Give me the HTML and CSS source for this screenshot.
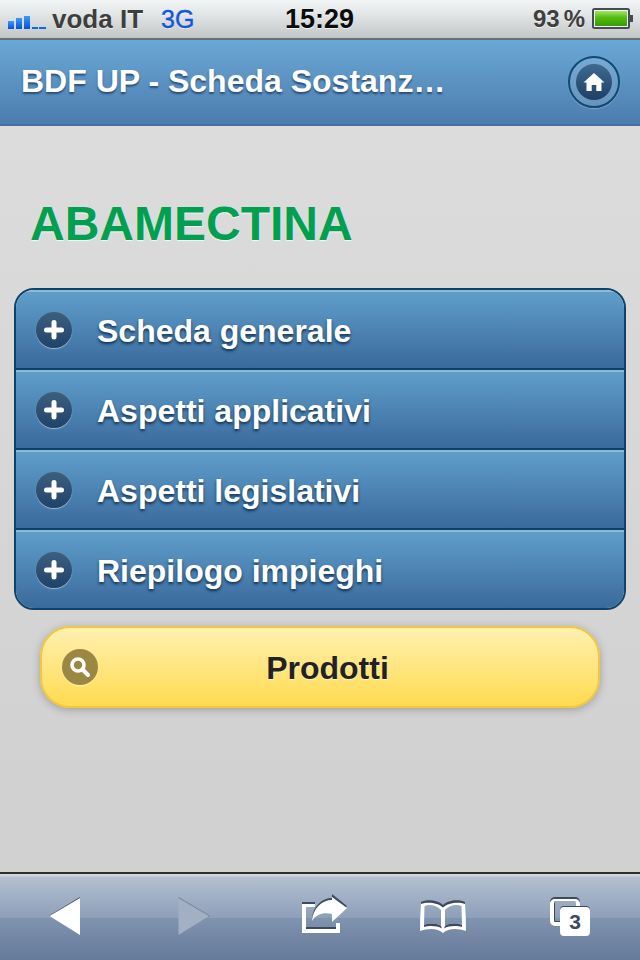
FILE: index.html
```html
<!DOCTYPE html>
<html lang="it">
<head>
<meta charset="utf-8">
<title>BDF UP - Scheda Sostanza</title>
<link rel="stylesheet" href="styles.css">
</head>
<body>
<div class="statusbar">
  <div class="status-left">
    <svg class="signal" width="40" height="14" viewBox="0 0 40 14">
      <defs><linearGradient id="sig" x1="0" y1="0" x2="0" y2="1"><stop offset="0" stop-color="#3b9bf5"/><stop offset="1" stop-color="#0a4fd8"/></linearGradient></defs>
      <rect x="0" y="6" width="6" height="8" fill="url(#sig)"/>
      <rect x="8" y="3" width="6" height="11" fill="url(#sig)"/>
      <rect x="16" y="1" width="6" height="13" fill="url(#sig)"/>
      <rect x="24" y="12" width="6" height="2" fill="#1a63e0"/>
      <rect x="31" y="12" width="7" height="2" fill="#1a63e0"/>
    </svg>
    <span class="carrier">voda IT</span>
    <span class="net">3G</span>
  </div>
  <span class="clock">15:29</span>
  <div class="status-right">
    <span class="pct">93 %</span>
    <svg class="battery" width="42" height="22" viewBox="0 0 42 22">
      <defs><linearGradient id="bat" x1="0" y1="0" x2="0" y2="1"><stop offset="0" stop-color="#a4e464"/><stop offset="0.45" stop-color="#52bc0e"/><stop offset="1" stop-color="#3a9a05"/></linearGradient></defs>
      <rect x="1" y="1" width="36" height="19" rx="1.5" fill="#f2f4f4" stroke="#444c5c" stroke-width="2"/>
      <rect x="3" y="3" width="32" height="15" fill="url(#bat)"/>
      <rect x="38" y="7" width="3" height="7" fill="#444c5c"/>
    </svg>
  </div>
</div>

<header class="topbar">
  <h1 class="topbar-title">BDF UP - Scheda Sostanz…</h1>
  <div class="home-ring">
    <span class="home-disc">
      <svg width="24" height="20" viewBox="0 0 22 20"><path d="M11 1 L21.500 10.500 H18.500 V19 H13.300 V13 H8.700 V19 H3.500 V10.500 H0.500 Z" fill="#fff"/></svg>
    </span>
  </div>
</header>

<main class="content">
  <h2 class="substance">ABAMECTINA</h2>
  <ul class="accordion">
    <li class="acc-row"><span class="plus"><svg width="26" height="26" viewBox="0 0 26 26"><path d="M13 5.500 V20 M5.500 13 H20.500" stroke="#fff" stroke-width="5" stroke-linecap="round"/></svg></span><span class="acc-label">Scheda generale</span></li>
    <li class="acc-row"><span class="plus"><svg width="26" height="26" viewBox="0 0 26 26"><path d="M13 5.500 V20 M5.500 13 H20.500" stroke="#fff" stroke-width="5" stroke-linecap="round"/></svg></span><span class="acc-label">Aspetti applicativi</span></li>
    <li class="acc-row"><span class="plus"><svg width="26" height="26" viewBox="0 0 26 26"><path d="M13 5.500 V20 M5.500 13 H20.500" stroke="#fff" stroke-width="5" stroke-linecap="round"/></svg></span><span class="acc-label">Aspetti legislativi</span></li>
    <li class="acc-row"><span class="plus"><svg width="26" height="26" viewBox="0 0 26 26"><path d="M13 5.500 V20 M5.500 13 H20.500" stroke="#fff" stroke-width="5" stroke-linecap="round"/></svg></span><span class="acc-label">Riepilogo impieghi</span></li>
  </ul>
  <div class="products">
    <span class="search-disc"><svg width="26" height="26" viewBox="0 0 26 26"><circle cx="11" cy="11" r="6" fill="none" stroke="#fff" stroke-width="3.600"/><path d="M15.500 15.500 L21 21" stroke="#fff" stroke-width="4" stroke-linecap="round"/></svg></span>
    <span class="products-label">Prodotti</span>
  </div>
</main>

<footer class="toolbar">
  <svg class="tool" width="36" height="42" viewBox="0 1 36 42">
    <path d="M32 2 V3.500 L3 22 L1.500 20.500 Z" fill="#3c4a60"/>
    <path d="M32 3 V40 L1.500 21 Z" fill="#fff"/>
  </svg>
  <svg class="tool" width="36" height="42" viewBox="0 1 36 42">
    <path d="M2.500 2 V3.500 L33 22 L33.500 20.500 Z" fill="#6f7f98"/>
    <path d="M2.500 3 V40 L33 21 Z" fill="#a3b0c3"/>
  </svg>
  <svg class="tool" width="50" height="46" viewBox="0 0 50 46">
    <path d="M2 10 H15 V13 H6 V35 H36 V29 H40 V39 H2 Z" fill="#fff"/>
    <path d="M2 8 H15 V10 H2 Z M6 33 H36 V35 H6 Z" fill="#3c4a60"/>
    <path d="M32 0 L47 12 L32 26 V18 C24 16 16 18 12 25 C13 12 22 4 32 4 Z" fill="#3c4a60"/>
    <path d="M32 3 L47 14 L32 28 V20 C24 18 16 20 12 27 C13 14 22 6 32 6 Z" fill="#fff"/>
  </svg>
  <svg class="tool" width="50" height="38" viewBox="0 1 50 38">
    <path d="M25 9 C20 4 9 3 3 6 Q2 20 2 34 C10 31 20 31 25 36 C30 31 40 31 48 34 Q48 20 47 6 C41 3 30 4 25 9 Z M23 13 V29 C18 26 10 26 6 28 L6.500 9 C11 7 19 8 23 13 Z M27 13 C31 8 39 7 43.500 9 L44 28 C40 26 32 26 27 29 Z" fill="#fff" fill-rule="evenodd"/>
    <path d="M3 5 C9 2 20 3 25 8 C30 3 41 2 47 5 L47 7 C41 4.500 30 5.500 25 10.500 C20 5.500 9 4.500 3 7 Z M6 28 C11 26 18 26 23 29 L24 31.500 C19 28.500 11 28.500 6 30 Z M44 28 C39 26 32 26 27 29 L26 31.500 C31 28.500 39 28.500 44 30 Z" fill="#3c4a60"/>
  </svg>
  <div class="tabs">
    <span class="tab-back"></span>
    <span class="tab-front">3</span>
  </div>
</footer>
</body>
</html>
```
FILE: styles.css
```css
* { box-sizing: border-box; }
html, body { margin: 0; padding: 0; }
body {
  width: 640px;
  height: 960px;
  overflow: hidden;
  display: flex;
  flex-direction: column;
  font-family: "Liberation Sans", Arial, sans-serif;
  background: #d6d6d6;
}

.statusbar {
  height: 40px;
  flex: none;
  display: flex;
  align-items: center;
  justify-content: space-between;
  padding: 0 6px 0 8px;
  position: relative;
  background: linear-gradient(#f1f5f6, #e4e7e8 35%, #c2c6c7);
  border-bottom: 2px solid #6a6e74;
}
.status-left, .status-right { display: flex; align-items: center; }
.signal { margin-top: 5px; margin-right: 4px; }
.carrier { font-size: 26px; font-weight: bold; color: #3e3e3e; text-shadow: 0 1px 0 rgba(255,255,255,.7); }
.net { font-size: 25px; color: #1357d8; margin-left: 18px; -webkit-text-stroke: 0.4px #1357d8; text-shadow: 0 1px 0 rgba(255,255,255,.7); }
.clock {
  position: absolute;
  left: 285px;
  top: 4px;
  font-size: 27px;
  font-weight: bold;
  color: #0c0c0c;
  text-shadow: 0 1px 0 rgba(255,255,255,.7);
}
.pct { font-size: 24px; font-weight: bold; color: #3e3e3e; margin-right: 7px; word-spacing: -2.700px; text-shadow: 0 1px 0 rgba(255,255,255,.7); }

.topbar {
  height: 86px;
  flex: none;
  display: flex;
  align-items: center;
  justify-content: space-between;
  padding: 0 20px 0 21px;
  background: linear-gradient(#6aa8d6, #4c7cae);
  border-bottom: 2px solid #456f9c;
}
.topbar-title {
  margin: -2px 0 0;
  font-size: 32px;
  font-weight: bold;
  color: #fff;
  text-shadow: 0 2px 2px rgba(20,50,90,.7);
}
.home-ring {
  width: 52px;
  height: 52px;
  border-radius: 50%;
  border: 2px solid #0f4a75;
  box-shadow: 0 1px 1px rgba(255,255,255,.3);
  display: flex;
  align-items: center;
  justify-content: center;
  background: rgba(255,255,255,.12);
}
.home-disc {
  width: 36px;
  height: 36px;
  border-radius: 50%;
  background: linear-gradient(#3f6a90, #1f3f66);
  display: flex;
  align-items: center;
  justify-content: center;
}

.content {
  flex: 1;
  padding: 0 14px;
  background: linear-gradient(#dcdcdc, #d0d0d0);
  display: flex;
  flex-direction: column;
}
.substance {
  margin: 68px 0 34px 16px;
  font-size: 48px;
  line-height: 60px;
  font-weight: bold;
  color: #00a050;
  text-shadow: 0 1px 1px rgba(255,255,255,.8);
}
.accordion {
  list-style: none;
  margin: 0;
  padding: 0;
  width: 612px;
  border: 2px solid #0c4468;
  border-radius: 20px;
  overflow: hidden;
}
.acc-row {
  height: 80px;
  display: flex;
  align-items: center;
  padding-left: 20px;
  background: linear-gradient(#5f9ecb, #3a6a9c);
  border-top: 2px solid #8dbad8;
  border-bottom: 2px solid #0c4468;
}
.acc-row:last-child { border-bottom: 0; height: 78px; }
.plus {
  width: 36px;
  height: 36px;
  border-radius: 50%;
  background: linear-gradient(#3d5f80, #1f4368);
  box-shadow: 0 1px 1px rgba(255,255,255,.5);
  display: flex;
  align-items: center;
  justify-content: center;
}
.acc-label {
  margin: 2px 0 0 25px;
  font-size: 32px;
  font-weight: bold;
  color: #fff;
  text-shadow: 0 2px 3px rgba(10,40,70,.9);
}
.products {
  margin: 16px 0 0 26px;
  width: 560px;
  height: 82px;
  position: relative;
  display: flex;
  align-items: center;
  justify-content: center;
  border: 2px solid #f3c63f;
  border-radius: 30px;
  background: linear-gradient(#fff0b0, #ffdb50);
  box-shadow: 0 2px 8px rgba(0,0,0,.25);
}
.search-disc {
  position: absolute;
  left: 20px;
  top: 21px;
  width: 36px;
  height: 36px;
  border-radius: 50%;
  background: #998742;
  box-shadow: 0 1px 1px rgba(255,255,255,.5);
  display: flex;
  align-items: center;
  justify-content: center;
}
.products-label {
  margin: 3px 0 0 15px;
  font-size: 32px;
  font-weight: bold;
  color: #222;
  text-shadow: 0 1px 1px rgba(255,255,255,.6);
}

.toolbar {
  height: 88px;
  flex: none;
  display: grid;
  grid-template-columns: 128px 124px 118px 132px 44px;
  align-items: center;
  padding-left: 48px;
  border-top: 2px solid #2e2e2e;
  background: linear-gradient(#d0d5db 0, #d0d5db 2px, #b4c0d0 3px, #8e9fb9 51%, #8093af 51%, #65799a 100%);
}
.tabs { position: relative; width: 44px; height: 40px; }
.tab-back {
  position: absolute;
  left: 0;
  top: 2px;
  width: 30px;
  height: 27px;
  border: 4px solid #fff;
  border-top-width: 2px;
  border-radius: 5px;
  box-shadow: 0 -2px 0 #3c4a60, inset 1px -1px 0 #3c4a60;
}
.tab-front {
  position: absolute;
  left: 10px;
  top: 10px;
  width: 30px;
  height: 29px;
  background: #fff;
  border-radius: 4px;
  box-shadow: 0 -1px 0 #3c4a60;
  color: #3c4a60;
  font-size: 21px;
  font-weight: bold;
  text-align: center;
  line-height: 30px;
}
```
